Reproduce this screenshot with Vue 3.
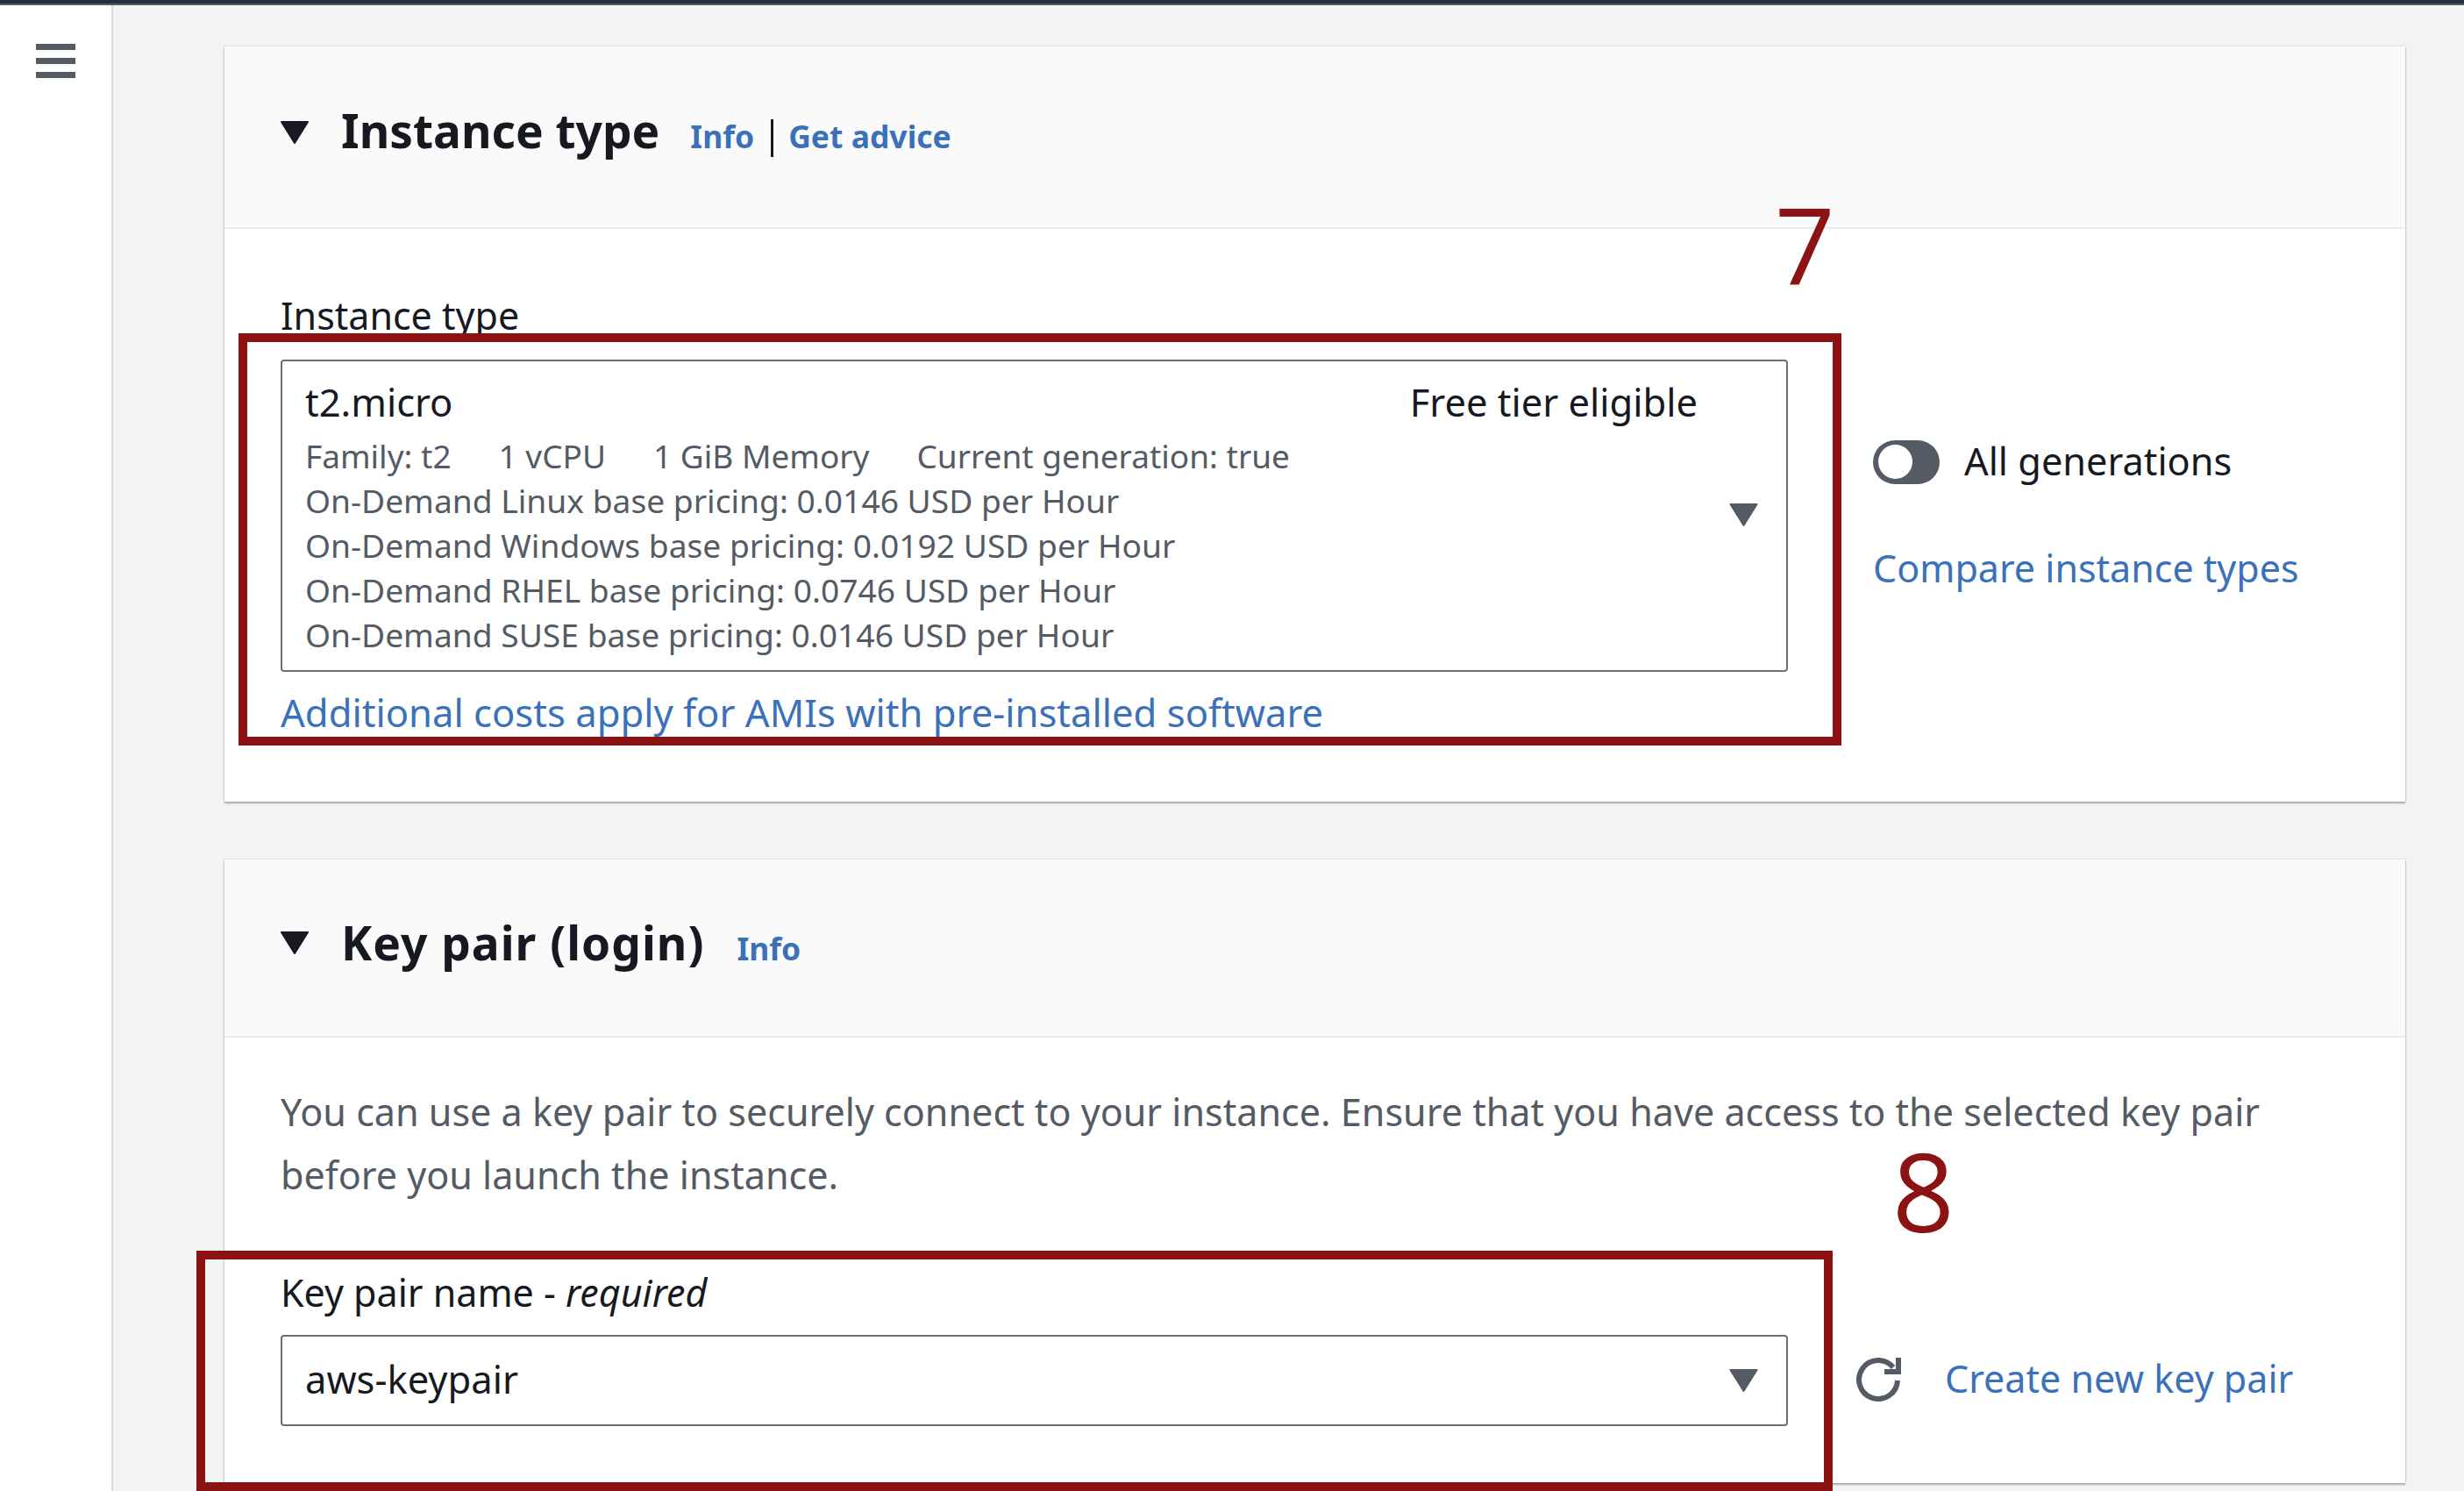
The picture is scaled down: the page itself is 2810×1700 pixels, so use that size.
<script setup>
const specs = [
  { id: 1, text: 'Family: t2' },
  { id: 2, text: '1 vCPU' },
  { id: 3, text: '1 GiB Memory' },
  { id: 4, text: 'Current generation: true' }
]
const pricing = [
  'On-Demand Linux base pricing: 0.0146 USD per Hour',
  'On-Demand Windows base pricing: 0.0192 USD per Hour',
  'On-Demand RHEL base pricing: 0.0746 USD per Hour',
  'On-Demand SUSE base pricing: 0.0146 USD per Hour'
]
</script>

<template>
  <div class="page">
    <div class="topbar"></div>
    <div class="shell">
      <aside class="sidebar">
        <div class="burger"><i></i><i></i><i></i></div>
      </aside>
      <main class="main">
        <section class="card card-one">
          <header class="card-head head-one">
            <svg class="caret" viewBox="0 0 32 26"><path d="M1 1h30L16 25z" fill="#16191f" stroke="#16191f" stroke-width="2" stroke-linejoin="round" /></svg>
            <h2 class="title">Instance type</h2>
            <a class="mini-link info-one">Info</a>
            <span class="sep"></span>
            <a class="mini-link">Get advice</a>
          </header>
          <div class="card-body body-one">
            <div class="field-col">
              <div class="label">Instance type</div>
              <div class="select tall">
                <div class="opt-main">
                  <span>t2.micro</span>
                  <span class="free">Free tier eligible</span>
                </div>
                <div class="spec-row">
                  <span v-for="s in specs" :key="s.id">{{ s.text }}</span>
                </div>
                <div v-for="p in pricing" :key="p" class="price">{{ p }}</div>
                <svg class="arrow arrow-tall" viewBox="0 0 32 26"><path d="M1 1h30L16 25z" fill="#545b64" stroke="#545b64" stroke-width="2" stroke-linejoin="round" /></svg>
              </div>
              <a class="link extra">Additional costs apply for AMIs with pre-installed software</a>
            </div>
            <div class="side-col">
              <div class="toggle-row">
                <span class="toggle"><span class="knob"></span></span>
                <span class="toggle-label">All generations</span>
              </div>
              <a class="link compare">Compare instance types</a>
            </div>
          </div>
        </section>

        <section class="card card-two">
          <header class="card-head head-two">
            <svg class="caret" viewBox="0 0 32 26"><path d="M1 1h30L16 25z" fill="#16191f" stroke="#16191f" stroke-width="2" stroke-linejoin="round" /></svg>
            <h2 class="title">Key pair (login)</h2>
            <a class="mini-link info-two">Info</a>
          </header>
          <div class="card-body body-two">
            <p class="desc">You can use a key pair to securely connect to your instance. Ensure that you have access to the selected key pair before you launch the instance.</p>
            <div class="key-row">
              <div class="field-col">
                <div class="label key-label">Key pair name - <em>required</em></div>
                <div class="select short">
                  <span class="short-value">aws-keypair</span>
                  <svg class="arrow" viewBox="0 0 32 26"><path d="M1 1h30L16 25z" fill="#545b64" stroke="#545b64" stroke-width="2" stroke-linejoin="round" /></svg>
                </div>
              </div>
              <div class="key-actions">
                <svg class="refresh" viewBox="0 0 52 52" fill="none" stroke="#545b64" stroke-width="6">
                  <path d="M42 11A22 22 0 1 0 47 26" />
                  <path d="M48 0V16H32" />
                </svg>
                <a class="link create">Create new key pair</a>
              </div>
            </div>
          </div>
        </section>
      </main>
    </div>

    <div class="mark mark-seven"></div>
    <div class="mark mark-eight"></div>
    <div class="num num-seven">7</div>
    <div class="num num-eight">8</div>
  </div>
</template>

<style>
html, body { margin: 0; padding: 0; background: #f2f3f3; }
</style>

<style scoped>
.page {
  position: relative;
  width: 2810px;
  height: 1700px;
  overflow: hidden;
  background: #f2f3f3;
  font-family: "Noto Sans", "Open Sans", sans-serif;
  color: #16191f;
}
.topbar {
  height: 6px;
  background: #232f3e;
  border-bottom: 2px solid #545b64;
  box-sizing: border-box;
}
.shell { display: flex; height: 1694px; }
.sidebar {
  width: 129px;
  flex: none;
  background: #fff;
  border-right: 2px solid #d5dbdb;
  box-sizing: border-box;
  padding: 44px 0 0 41px;
}
.burger { display: flex; flex-direction: column; gap: 9px; width: 45px; }
.burger i { display: block; height: 7px; background: #545b64; }
.main {
  flex: 1;
  padding: 47px 67px 0 127px;
  display: flex;
  flex-direction: column;
  gap: 66px;
}
.card {
  background: #fff;
  box-shadow: 0 2px 2px rgba(0, 28, 36, 0.3), 0 0 2px rgba(0, 28, 36, 0.2);
}
.card-head {
  display: flex;
  align-items: baseline;
  background: #fafafa;
  border-bottom: 2px solid #eaeded;
  box-sizing: border-box;
  padding-left: 64px;
}
.head-one { height: 208px; padding-top: 63px; }
.head-two { height: 203px; padding-top: 62px; }
.caret {
  width: 32px;
  height: 26px;
  margin-right: 37px;
  align-self: flex-start;
  margin-top: 22px;
  flex: none;
}
.head-two .caret { margin-top: 20px; }
.title {
  margin: 0;
  font-size: 53.200px;
  font-weight: 700;
  line-height: 66px;
}
.head-two .title { letter-spacing: 1px; }
.mini-link {
  font-size: 35.500px;
  font-weight: 700;
  color: #3a71b9;
}
.info-one { margin-left: 35px; }
.info-two { margin-left: 37px; }
.sep {
  width: 3px;
  height: 43px;
  background: #16191f;
  margin: 20px 17px 0 19px;
  align-self: flex-start;
}
.card-body { box-sizing: border-box; padding: 0 64px; }
.body-one { display: flex; height: 653px; padding-top: 74px; }
.field-col { width: 1719px; flex: none; }
.label { font-size: 43px; line-height: 50px; height: 75px; }
.select {
  position: relative;
  box-sizing: border-box;
  border: 2px solid #687078;
  border-radius: 4px;
  background: #fff;
}
.tall { height: 356px; padding: 18px 26px 0; }
.opt-main {
  display: flex;
  justify-content: space-between;
  font-size: 43.500px;
  line-height: 56px;
  padding-right: 75px;
}
.spec-row {
  display: flex;
  gap: 54px;
  font-size: 37px;
  line-height: 51px;
  color: #545b64;
  margin-top: 8px;
}
.price { font-size: 37.200px; line-height: 51px; color: #545b64; }
.arrow {
  position: absolute;
  right: 32px;
  width: 33px;
  height: 26px;
}
.arrow-tall { top: 162px; }
.link { font-size: 43.300px; color: #3a71b9; }
.extra { display: block; margin-top: 18px; line-height: 56px; font-size: 43.600px; }
.side-col { padding: 167px 0 0 97px; }
.toggle-row { display: flex; align-items: center; gap: 28px; height: 50px; }
.toggle {
  width: 76px;
  height: 50px;
  border-radius: 25px;
  background: #545b64;
  position: relative;
  flex: none;
}
.knob {
  position: absolute;
  left: 6px;
  top: 5px;
  width: 39px;
  height: 39px;
  border-radius: 50%;
  background: #fff;
}
.toggle-label { font-size: 43.300px; padding-bottom: 4px; }
.compare { display: block; margin-top: 70px; line-height: 52px; font-size: 43px; }
.body-two { height: 508px; padding-top: 49px; }
.desc {
  margin: 0;
  font-size: 43.100px;
  line-height: 72px;
  color: #545b64;
}
.key-row { display: flex; margin-top: 73px; }
.key-label { height: 73px; }
.short {
  height: 104px;
  display: flex;
  align-items: center;
  padding-left: 26px;
  font-size: 43.500px;
}
.short-value { padding-bottom: 4px; }
.short .arrow { top: 37px; }
.key-actions {
  display: flex;
  align-items: center;
  gap: 49px;
  margin: 73px 0 0 78px;
  height: 104px;
}
.refresh { width: 52px; height: 52px; flex: none; }
.create { padding-bottom: 5px; font-size: 43px; }
.mark {
  position: absolute;
  box-sizing: border-box;
  border: 10px solid #8b1313;
}
.mark-seven { left: 272px; top: 380px; width: 1828px; height: 470px; }
.mark-eight { left: 224px; top: 1426px; width: 1866px; height: 274px; }
.num {
  position: absolute;
  color: #8b1313;
  font-family: "Open Sans", sans-serif;
  line-height: 1;
}
.num-seven { left: 2024px; top: 218px; font-size: 120px; }
.num-eight { left: 2158px; top: 1295px; font-size: 124px; }
</style>
